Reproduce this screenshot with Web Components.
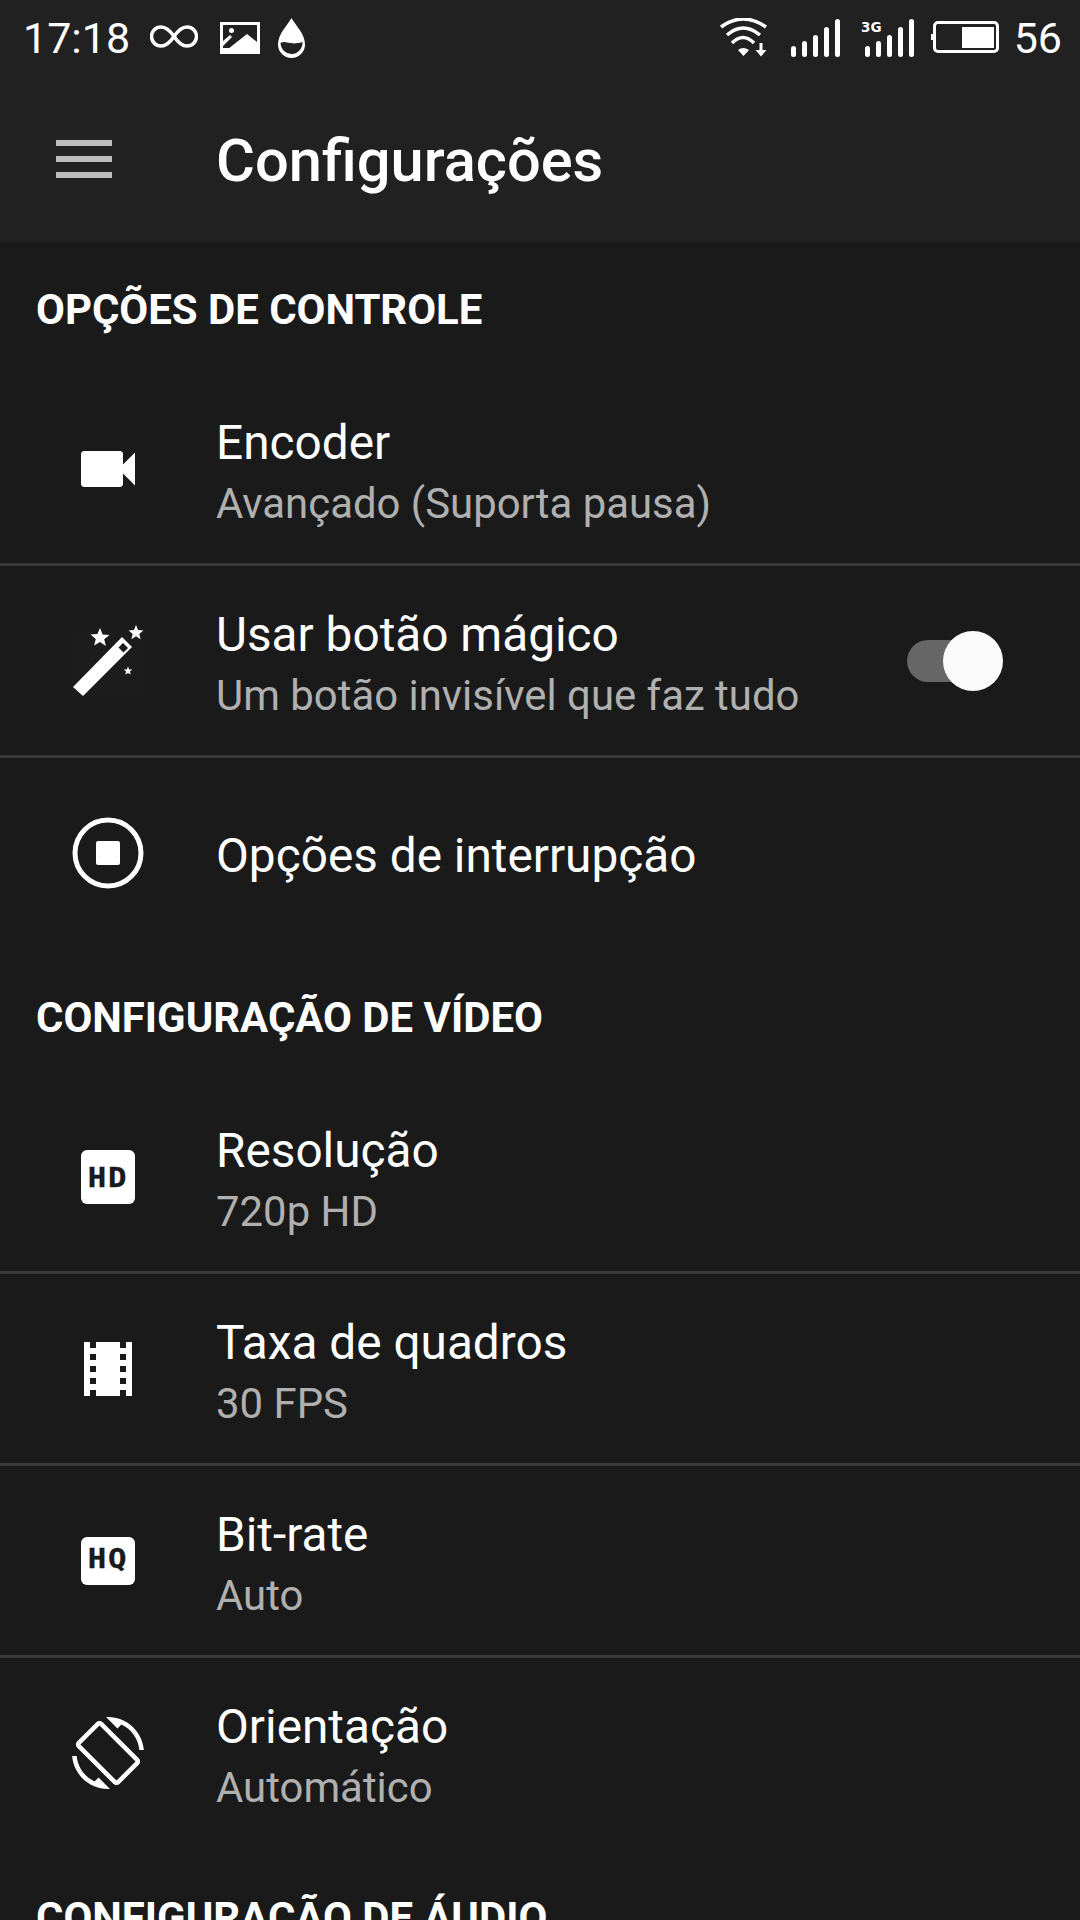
<!DOCTYPE html>
<html lang="pt">
<head>
<meta charset="utf-8">
<title>Configurações</title>
<style>
  html, body { margin: 0; height: 1920px; overflow: hidden; background: #1a1a1a; }
  body { font-family: Roboto, "Liberation Sans", sans-serif; color: #fff; }
</style>
</head>
<body>
<settings-screen>
  <status-bar slot="top"></status-bar>
  <app-bar slot="top">Configurações</app-bar>

  <section-title>OPÇÕES DE CONTROLE</section-title>
  <setting-row icon="videocam" label="Encoder" detail="Avançado (Suporta pausa)" divider></setting-row>
  <setting-row icon="wand" label="Usar botão mágico" detail="Um botão invisível que faz tudo" divider><toggle-switch></toggle-switch></setting-row>
  <setting-row icon="stop" label="Opções de interrupção"></setting-row>

  <section-title>CONFIGURAÇÃO DE VÍDEO</section-title>
  <setting-row icon="hd" label="Resolução" detail="720p HD" divider></setting-row>
  <setting-row icon="film" label="Taxa de quadros" detail="30 FPS" divider></setting-row>
  <setting-row icon="hq" label="Bit-rate" detail="Auto" divider></setting-row>
  <setting-row icon="rotate" label="Orientação" detail="Automático"></setting-row>

  <section-title>CONFIGURAÇÃO DE ÁUDIO</section-title>
</settings-screen>

<script>
// Icons of the settings rows, all drawn in a 72x72 box
const ROW_ICONS = {
    videocam: `<svg viewBox="0 0 24 24" width="72" height="72"><path fill="#fff" d="M17 10.5V7c0-.55-.45-1-1-1H4c-.55 0-1 .45-1 1v10c0 .55.45 1 1 1h12c.55 0 1-.45 1-1v-3.5l4 4v-11l-4 4z"/></svg>`,
    wand: `<svg viewBox="0 0 72 72" width="72" height="72">
        <rect width="72" height="72" fill="#1c1c1c"/>
        <path fill="#fff" d="M1 62 50 12 60 22 11 71Z"/>
        <path fill="#1c1c1c" d="M46.500 22.500 51 18 56 23 51.500 27.500Z"/>
        <path fill="#fff" d="M28 3l2.600 6.400 6.900.5-5.300 4.400 1.700 6.700L28 17l-5.900 3.600 1.700-6.700-5.300-4.400 6.900-.5zM64 0l2 5 5.400.4-4.100 3.500 1.300 5.300L64 11.300l-4.600 2.900 1.300-5.300-4.100-3.500L62 5zM56 41.500l1.200 2.900 3.100.2-2.400 2 .8 3-2.700-1.600-2.700 1.600.8-3-2.400-2 3.100-.2z"/>
    </svg>`,
    stop: `<svg viewBox="0 0 72 72" width="72" height="72"><circle cx="36" cy="36" r="33" fill="none" stroke="#fff" stroke-width="5"/><rect x="24" y="24" width="24" height="24" rx="2" fill="#fff"/></svg>`,
    hd: `<svg viewBox="0 0 72 72" width="72" height="72"><rect x="9" y="9" width="54" height="54" rx="6" fill="#fff"/><text transform="translate(36 45.500) scale(1.180 1)" text-anchor="middle" font-family="'DejaVu Sans Mono', monospace" font-weight="700" font-size="26" letter-spacing="1.500" stroke="#1a1a1a" stroke-width=".3" fill="#1a1a1a">HD</text></svg>`,
    hq: `<svg viewBox="0 0 72 72" width="72" height="72"><rect x="9" y="12" width="54" height="48" rx="6" fill="#fff"/><text transform="translate(36 43) scale(1.180 1)" text-anchor="middle" font-family="'DejaVu Sans Mono', monospace" font-weight="700" font-size="26" letter-spacing="1.500" stroke="#1a1a1a" stroke-width=".3" fill="#1a1a1a">HQ</text></svg>`,
    film: `<svg viewBox="0 0 24 24" width="72" height="72"><path fill="#fff" d="M18 3v2h-2V3H8v2H6V3H4v18h2v-2h2v2h8v-2h2v2h2V3h-2zM8 17H6v-2h2v2zm0-4H6v-2h2v2zm0-4H6V7h2v2zm10 8h-2v-2h2v2zm0-4h-2v-2h2v2zm0-4h-2V7h2v2z"/></svg>`,
    rotate: `<svg viewBox="0 0 24 24" width="72" height="72"><path fill="#fff" d="M16.480 2.520c3.270 1.550 5.610 4.720 5.970 8.480h1.500C23.440 4.840 18.290 0 12 0l-.66.03 3.810 3.810 1.330-1.320zm-6.250-.77c-.59-.59-1.540-.59-2.120 0L1.750 8.110c-.59.59-.59 1.540 0 2.120l12.020 12.020c.59.59 1.540.59 2.120 0l6.360-6.360c.59-.59.59-1.540 0-2.120L10.230 1.750zm4.600 19.440L2.810 9.170l6.360-6.360 12.020 12.020-6.360 6.360zm-7.310.29C4.250 19.940 1.910 16.760 1.550 13H.05C.56 19.160 5.710 24 12 24l.66-.03-3.810-3.810-1.330 1.320z"/></svg>`
};

// Page frame: dark header area on top, the list under it
class SettingsScreen extends HTMLElement {
    constructor() {
        super();
        this.attachShadow({ mode: 'open' });
        this.shadowRoot.innerHTML = `
            <style>
                :host { display: block; height: 1920px; overflow: hidden; background: #1a1a1a; }
                header { background: #212121; }
            </style>
            <header><slot name="top"></slot></header>
            <slot></slot>
        `;
    }
}

class StatusBar extends HTMLElement {
    constructor() {
        super();
        this.attachShadow({ mode: 'open' });
        this.shadowRoot.innerHTML = `
            <style>
                :host {
                    display: flex;
                    justify-content: space-between;
                    height: 76px;
                    padding: 0 18px 0 23px;
                    font-size: 43px;
                    font-weight: 400;
                    color: #fff;
                }
                .group { display: flex; align-items: flex-start; }
                svg { display: block; flex: none; }
                .time, .level { line-height: 76px; height: 76px; }
            </style>
            <div class="group">
                <span class="time">17:18</span>
                <svg style="margin:25px 0 0 20px" width="48" height="23" viewBox="0 0 48 23"><path fill="none" stroke="#fff" stroke-width="3.500" d="M24 11.500C19 4 15 2 11 2a9.500 9.500 0 0 0 0 19c4 0 8-2 13-9.500C29 4 33 2 37 2a9.500 9.500 0 0 1 0 19c-4 0-8-2-13-9.500Z"/></svg>
                <svg style="margin:22px 0 0 22px" width="40" height="32" viewBox="0 0 40 32">
                    <rect width="40" height="32" fill="#fff"/>
                    <rect x="3" y="3" width="34" height="23" fill="#212121"/>
                    <circle cx="11.500" cy="8.500" r="2.500" fill="#fff"/>
                    <path fill="#fff" d="M3 19 10 13 12 15 3 24ZM8 27 27 12 37 20V27Z"/>
                </svg>
                <svg style="margin:18px 0 0 18px" width="27" height="40" viewBox="0 0 27 40">
                    <path fill="#fff" d="M13.500 0C18 8 27 16 27 26.500a13.500 13.500 0 0 1-27 0C0 16 9 8 13.500 0Z"/>
                    <path fill="#212121" d="M2.500 25C8 22 12 28 24.500 24a11 11.500 0 0 1-22 1Z"/>
                </svg>
            </div>
            <div class="group">
                <svg style="margin:18px 0 0 0" width="48" height="40" viewBox="720 18 48 40">
                    <g fill="none" stroke="#fff" stroke-width="3.500">
                        <path d="M722 27Q744 11 767 27"/>
                        <path d="M728 35Q744 21 761 35"/>
                        <path d="M733 43Q744 32 755 43"/>
                    </g>
                    <path fill="#fff" d="M739 50Q744 46 750 50L744.500 56ZM760.500 43H763.500V50H767.500L762 56.500 756.500 50H760.500Z"/>
                </svg>
                <svg style="margin:18px 0 0 24px" width="49" height="40" viewBox="0 0 49 40">
                    <g fill="#fff">
                        <rect x="0" y="28" width="5" height="11" rx="2.500"/>
                        <rect x="11" y="23" width="5" height="16" rx="2.500"/>
                        <rect x="22" y="17" width="5" height="22" rx="2.500"/>
                        <rect x="33" y="9" width="5" height="30" rx="2.500"/>
                        <rect x="44" y="1" width="5" height="38" rx="2.500"/>
                    </g>
                </svg>
                <svg style="margin:18px 0 0 21px" width="53" height="40" viewBox="0 0 53 40">
                    <text x="0" y="14" font-family="'DejaVu Sans', sans-serif" font-weight="700" font-size="13.500" fill="#fff">3G</text>
                    <g fill="#fff">
                        <rect x="4" y="28" width="5" height="11" rx="2.500"/>
                        <rect x="15" y="23" width="5" height="16" rx="2.500"/>
                        <rect x="26" y="17" width="5" height="22" rx="2.500"/>
                        <rect x="37" y="9" width="5" height="30" rx="2.500"/>
                        <rect x="48" y="1" width="5" height="38" rx="2.500"/>
                    </g>
                </svg>
                <svg style="margin:21px 0 0 17px" width="68" height="32" viewBox="0 0 68 32">
                    <rect x="3.500" y="1.500" width="63" height="29" rx="3.500" fill="none" stroke="#fff" stroke-width="3"/>
                    <rect x="0" y="13" width="2" height="6" fill="#fff"/>
                    <rect x="31" y="6" width="32" height="21" fill="#fff"/>
                </svg>
                <span class="level" style="margin-left:15px">56</span>
            </div>
        `;
    }
}

class AppBar extends HTMLElement {
    constructor() {
        super();
        this.attachShadow({ mode: 'open' });
        this.shadowRoot.innerHTML = `
            <style>
                :host {
                    display: flex;
                    align-items: center;
                    gap: 104px;
                    height: 166px;
                    padding-left: 56px;
                    box-sizing: border-box;
                    font-size: 59.600px;
                    font-weight: 500;
                    color: #fff;
                }
                .menu { display: flex; flex-direction: column; gap: 10px; width: 56px; }
                .menu span { height: 6px; background: #bdbdbd; }
                .title { padding-top: 3px; }
            </style>
            <div class="menu"><span></span><span></span><span></span></div>
            <div class="title"><slot></slot></div>
        `;
    }
}

class SectionTitle extends HTMLElement {
    constructor() {
        super();
        this.attachShadow({ mode: 'open' });
        this.shadowRoot.innerHTML = `
            <style>
                :host {
                    display: flex;
                    align-items: center;
                    height: 132px;
                    box-sizing: border-box;
                    padding-left: 36px;
                    padding-top: 3px;
                    font-size: 41.900px;
                    font-weight: 700;
                    color: #fff;
                }
            </style>
            <slot></slot>
        `;
    }
}

class SettingRow extends HTMLElement {
    constructor() {
        super();
        this.attachShadow({ mode: 'open' });
    }

    connectedCallback() {
        this.render();
    }

    render() {
        const detail = this.getAttribute('detail');
        this.shadowRoot.innerHTML = `
            <style>
                :host {
                    display: flex;
                    align-items: center;
                    height: 192px;
                    box-sizing: border-box;
                    padding-left: 72px;
                    border-bottom: 3px solid transparent;
                }
                :host([divider]) { border-bottom-color: #3a3a3a; }
                .icon { flex: none; width: 72px; height: 72px; margin-right: 72px; }
                .icon svg { display: block; }
                .text { flex: 1; min-width: 0; padding-top: 8px; }
                :host([detail]) .text { padding-top: 10px; }
                .label { font-size: 47.750px; line-height: 61px; color: #fff; }
                .detail { font-size: 41.900px; line-height: 60px; color: #b0b0b0; }
            </style>
            <div class="icon">${ROW_ICONS[this.getAttribute('icon')]}</div>
            <div class="text">
                <div class="label">${this.getAttribute('label')}</div>
                ${detail ? `<div class="detail">${detail}</div>` : ''}
            </div>
            <slot></slot>
        `;
    }
}

class ToggleSwitch extends HTMLElement {
    constructor() {
        super();
        this.attachShadow({ mode: 'open' });
        this.shadowRoot.innerHTML = `
            <style>
                :host {
                    display: block;
                    position: relative;
                    flex: none;
                    width: 84px;
                    height: 42px;
                    margin-right: 89px;
                    border-radius: 21px;
                    background: #666;
                }
                .thumb {
                    position: absolute;
                    right: -12px;
                    top: -9px;
                    width: 60px;
                    height: 60px;
                    border-radius: 50%;
                    background: #fafafa;
                }
            </style>
            <div class="thumb"></div>
        `;
    }
}

customElements.define('settings-screen', SettingsScreen);
customElements.define('status-bar', StatusBar);
customElements.define('app-bar', AppBar);
customElements.define('section-title', SectionTitle);
customElements.define('setting-row', SettingRow);
customElements.define('toggle-switch', ToggleSwitch);
</script>
</body>
</html>
